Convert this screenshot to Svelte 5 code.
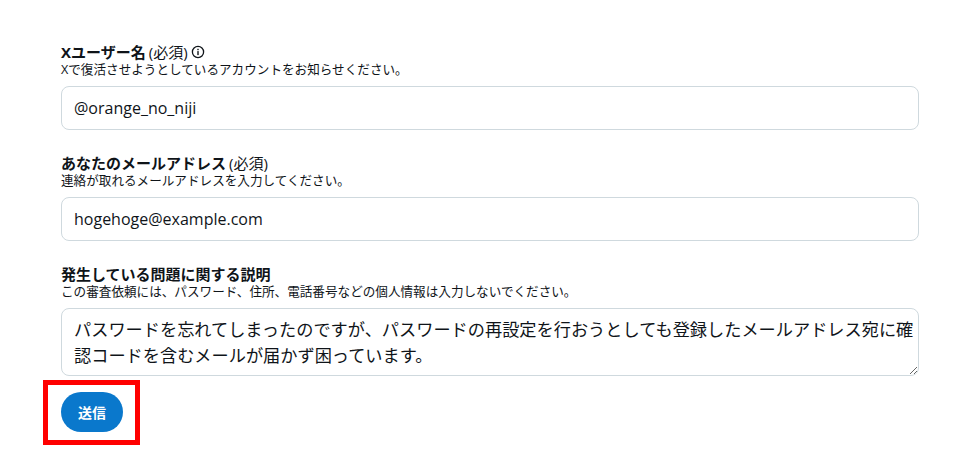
<script>
	const fields = [
		{
			label: "Xユーザー名",
			required: true,
			info: true,
			hint: "Xで復活させようとしているアカウントをお知らせください。",
			value: "@orange_no_niji",
		},
		{
			label: "あなたのメールアドレス",
			required: true,
			hint: "連絡が取れるメールアドレスを入力してください。",
			value: "hogehoge@example.com",
		},
		{
			label: "発生している問題に関する説明",
			hint: "この審査依頼には、パスワード、住所、電話番号などの個人情報は入力しないでください。",
			value:
				"パスワードを忘れてしまったのですが、パスワードの再設定を行おうとしても登録したメールアドレス宛に確認コードを含むメールが届かず困っています。",
			multiline: true,
		},
	];
</script>

<form class="form" onsubmit={(e) => e.preventDefault()}>
	{#each fields as field}
		<div class="field">
			<div class="label">
				<strong>{field.label}</strong>
				{#if field.required}<span class="req">(必須)</span>{/if}
				{#if field.info}
					<svg class="info" viewBox="0 0 14 14" width="14" height="14" aria-hidden="true">
						<circle cx="7" cy="7" r="5.6" fill="none" stroke="#0f1419" stroke-width="1.3" />
						<rect x="6.3" y="6.1" width="1.4" height="4" fill="#0f1419" />
						<rect x="6.3" y="3.8" width="1.4" height="1.4" fill="#0f1419" />
					</svg>
				{/if}
			</div>
			<div class="hint">{field.hint}</div>
			{#if field.multiline}
				<textarea class="box area" value={field.value}></textarea>
			{:else}
				<input class="box" type="text" value={field.value} />
			{/if}
		</div>
	{/each}
	<div class="actions">
		<button class="send" type="submit">送信</button>
		<div class="highlight"></div>
	</div>
</form>

<style>
	:global(body) {
		margin: 0;
		background: #fff;
	}

	.form {
		display: flex;
		flex-direction: column;
		gap: 25px;
		width: 858px;
		padding: 44px 0 38px 61px;
		font-family: "Open Sans", "Noto Sans CJK JP", sans-serif;
		color: #0f1419;
	}

	.field {
		display: flex;
		flex-direction: column;
	}

	.label {
		display: flex;
		align-items: center;
		gap: 3px;
		height: 16px;
		margin-bottom: 2px;
		font-size: 15px;
		line-height: 16px;
	}

	.label strong {
		font-weight: 700;
	}

	.hint {
		height: 16px;
		margin-bottom: 8px;
		font-size: 12.6px;
		line-height: 16px;
	}

	.box {
		box-sizing: border-box;
		width: 100%;
		height: 44px;
		padding: 0 12px;
		border: 1px solid #cfd9de;
		border-radius: 8px;
		background: #fff;
		color: #0f1419;
		font: inherit;
		font-size: 16px;
		outline: none;
	}

	.area {
		display: block;
		height: 68px;
		padding: 8px 0 8px 12px;
		font-size: 17.2px;
		line-height: 26px;
		overflow: hidden;
		resize: vertical;
	}

	.actions {
		position: relative;
		margin-top: -9px;
	}

	.send {
		display: block;
		width: 62px;
		height: 40px;
		border: 0;
		border-radius: 20px;
		background: #0a78cc;
		color: #fff;
		font: inherit;
		font-size: 14px;
		font-weight: 700;
	}

	.highlight {
		position: absolute;
		left: -18px;
		top: -12px;
		width: 97px;
		height: 65px;
		box-sizing: border-box;
		border: 5px solid #f00;
		pointer-events: none;
	}
</style>
